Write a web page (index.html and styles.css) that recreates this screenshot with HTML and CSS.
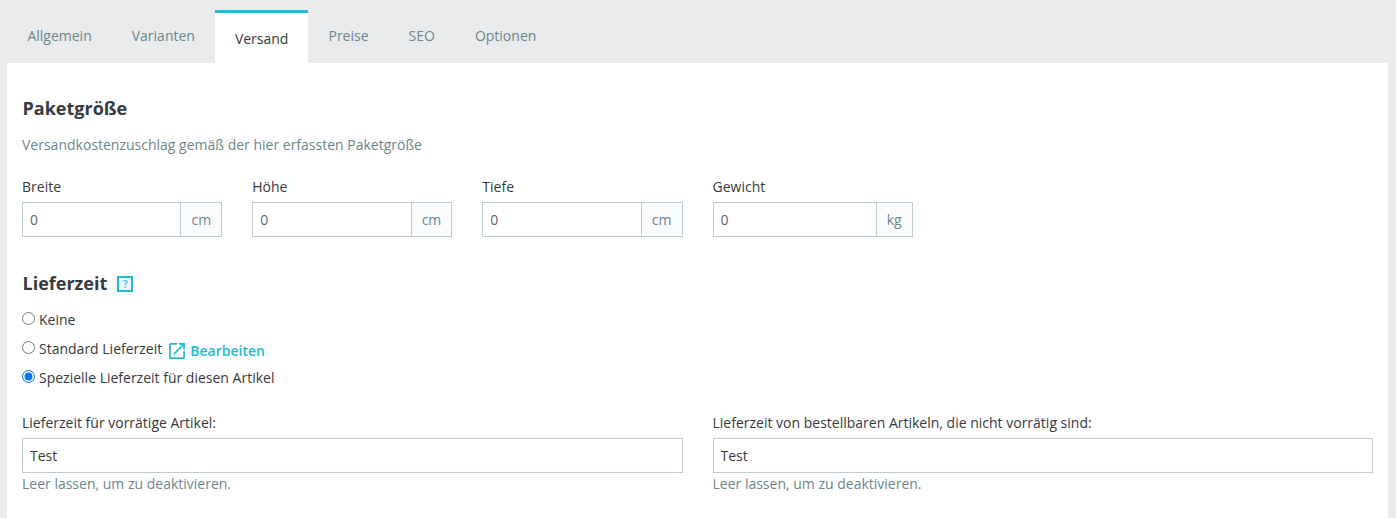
FILE: index.html
```html
<!DOCTYPE html>
<html lang="de">
<head>
<meta charset="utf-8">
<title>Versand</title>
<link rel="stylesheet" href="styles.css">
</head>
<body>
<nav class="tabs">
  <a class="tab">Allgemein</a>
  <a class="tab">Varianten</a>
  <a class="tab active">Versand</a>
  <a class="tab">Preise</a>
  <a class="tab">SEO</a>
  <a class="tab">Optionen</a>
</nav>
<main class="panel">
  <h2 class="title first">Paketgröße</h2>
  <p class="desc">Versandkostenzuschlag gemäß der hier erfassten Paketgröße</p>
  <div class="grid">
    <div class="field"><label class="label">Breite</label><div class="group"><input class="input" value="0"><span class="unit">cm</span></div></div>
    <div class="field"><label class="label">Höhe</label><div class="group"><input class="input" value="0"><span class="unit">cm</span></div></div>
    <div class="field"><label class="label">Tiefe</label><div class="group"><input class="input" value="0"><span class="unit">cm</span></div></div>
    <div class="field"><label class="label">Gewicht</label><div class="group"><input class="input" value="0"><span class="unit">kg</span></div></div>
  </div>
  <h2 class="title second">Lieferzeit <span class="help">?</span></h2>
  <div class="radios">
    <label class="radio"><input type="radio" name="d"><span>Keine</span></label>
    <label class="radio"><input type="radio" name="d"><span>Standard Lieferzeit</span>
      <a class="edit"><svg class="edit-icon" width="16" height="16" viewBox="3 3 18 18" fill="#25b9d7"><path d="M19 19H5V5h7V3H5c-1.110 0-2 .9-2 2v14c0 1.100.89 2 2 2h14c1.100 0 2-.9 2-2v-7h-2v7zM14 3v2h3.590l-9.830 9.830 1.410 1.410L19 6.410V10h2V3h-7z"/></svg>Bearbeiten</a></label>
    <label class="radio"><input type="radio" name="d" checked><span>Spezielle Lieferzeit für diesen Artikel</span></label>
  </div>
  <div class="grid lower">
    <div class="field wide"><label class="label">Lieferzeit für vorrätige Artikel:</label><input class="input boxed" value="Test"><small class="hint">Leer lassen, um zu deaktivieren.</small></div>
    <div class="field wide"><label class="label">Lieferzeit von bestellbaren Artikeln, die nicht vorrätig sind:</label><input class="input boxed" value="Test"><small class="hint">Leer lassen, um zu deaktivieren.</small></div>
  </div>
</main>
</body>
</html>
```
FILE: styles.css
```css
* { box-sizing: border-box; }
html, body { height: 100%; }
body {
  margin: 0;
  overflow: hidden;
  background: #eaebed;
  font-family: "Open Sans", sans-serif;
  font-size: 14px;
  line-height: 21px;
  color: #363a41;
}
.tabs {
  display: flex;
  height: 63px;
  padding: 10px 0 0 7.4px;
}
.tab {
  padding: 15px 20px 0;
  color: #6c868e;
}
.tab.active {
  padding-top: 15px;
  border-top: 3px solid #25b9d7;
  background: #fff;
  color: #363a41;
}
.panel {
  margin: 0 8px 0 7px;
  height: 455px;
  padding: 32px 15px 0;
  background: #fff;
}
.title {
  margin: 0;
  font-size: 18px;
  line-height: 27px;
  font-weight: 700;
  display: flex;
  align-items: center;
}
.first { padding-left: 0.5px; }
.second { padding-left: 0.5px; }
.desc {
  margin: 12px 0 0;
  color: #6c868e;
}
.grid {
  display: grid;
  grid-template-columns: repeat(6, 1fr);
  column-gap: 30px;
  margin-top: 21px;
}
.label {
  display: block;
  margin-bottom: 5px;
}
.group { display: flex; height: 35px; }
.input {
  width: 100%;
  min-width: 0;
  height: 35px;
  padding: 0 7px;
  border: 1px solid #bbcdd2;
  border-radius: 0;
  outline: 0;
  background: #fff;
  font: inherit;
  color: #363a41;
}
.group .input { flex: 1; border-right: 0; color: #5a6469; }
.unit {
  display: flex;
  align-items: center;
  padding: 0 10px;
  border: 1px solid #bbcdd2;
  background: #fafbfc;
  color: #6c868e;
}
.second { margin-top: 33px; }
.help {
  display: inline-flex;
  align-items: center;
  justify-content: center;
  width: 16px;
  height: 16px;
  margin-left: 10px;
  border: 2px solid #25b9d7;
  background: #ebf8fb;
  color: #5cc9e0;
  font-size: 10px;
  line-height: 1;
}
.radios { margin-top: 8px; }
.radio {
  display: flex;
  align-items: flex-start;
  height: 29px;
  padding-top: 4px;
}
.radio input {
  width: 13px;
  height: 13px;
  margin: 3px 4px 0 0;
}
.edit {
  display: inline-flex;
  align-items: center;
  margin: 2px 0 0 7px;
  color: #25b9d7;
  font-weight: 600;
}
.edit-icon { margin-right: 5px; }
.lower { margin-top: 20px; }
.wide { grid-column: span 3; }
.boxed { display: block; }
.hint {
  display: block;
  font-size: 14px;
  color: #6c868e;
}
```
